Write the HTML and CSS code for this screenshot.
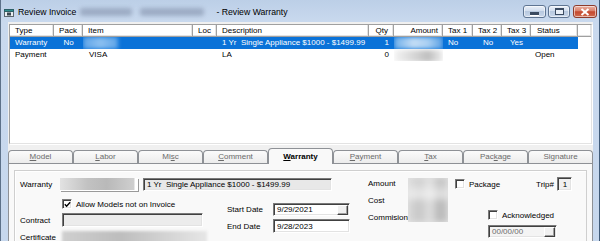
FILE: index.html
```html
<!DOCTYPE html>
<html lang="en">
<head>
<meta charset="utf-8">
<title>Review Invoice - Review Warranty</title>
<link rel="stylesheet" href="styles.css">
</head>
<body>
<div class="window">
  <div class="titlebar">
    <svg class="appicon" width="11" height="10" viewBox="0 0 11 10">
      <rect x="0.5" y="1.5" width="9" height="7" fill="#e8eef2" stroke="#5b6770"/>
      <rect x="0.5" y="1.5" width="9" height="2" fill="#2f8f8f" stroke="#2b5f66"/>
      <rect x="3" y="4.5" width="4" height="3" fill="#3a4650"/>
    </svg>
    <span class="title">Review Invoice</span>
    <span class="title-blur"><i class="b1"></i><i class="b2"></i></span>
    <span class="title title2">- Review Warranty</span>
    <div class="caption-btns">
      <div class="cbtn cmin"><span class="g-min"></span></div>
      <div class="cbtn cmax"><span class="g-max"></span></div>
      <div class="cbtn cclose">
        <svg width="10" height="8" viewBox="0 0 10 8"><path d="M1.5 1 L8.5 7 M8.5 1 L1.5 7" stroke="#fff" stroke-width="2"/></svg>
      </div>
    </div>
  </div>

  <div class="client">
    <div class="listview">
      <div class="lv-row lv-head">
        <div class="c c-type">Type</div>
        <div class="c c-pack">Pack</div>
        <div class="c c-item">Item</div>
        <div class="c c-loc">Loc</div>
        <div class="c c-desc">Description</div>
        <div class="c c-qty">Qty</div>
        <div class="c c-amt">Amount</div>
        <div class="c c-t1">Tax 1</div>
        <div class="c c-t2">Tax 2</div>
        <div class="c c-t3">Tax 3</div>
        <div class="c c-status">Status</div>
        <div class="c c-fill"></div>
      </div>
      <div class="lv-row sel">
        <div class="c c-type">Warranty</div>
        <div class="c c-pack">No</div>
        <div class="c c-item blurcell"><i class="blur-sel-item"></i></div>
        <div class="c c-loc"></div>
        <div class="c c-desc">1 Yr&nbsp; Single Appliance $1000 - $1499.99</div>
        <div class="c c-qty">1</div>
        <div class="c c-amt blurcell"><i class="blur-sel-amt"></i></div>
        <div class="c c-t1">No</div>
        <div class="c c-t2">No</div>
        <div class="c c-t3">Yes</div>
        <div class="c c-status"></div>
        <div class="c c-fill"></div>
      </div>
      <div class="lv-row">
        <div class="c c-type">Payment</div>
        <div class="c c-pack"></div>
        <div class="c c-item">VISA</div>
        <div class="c c-loc"></div>
        <div class="c c-desc">LA</div>
        <div class="c c-qty">0</div>
        <div class="c c-amt blurcell"><i class="blur-amt"></i></div>
        <div class="c c-t1"></div>
        <div class="c c-t2"></div>
        <div class="c c-t3"></div>
        <div class="c c-status">Open</div>
        <div class="c c-fill"></div>
      </div>
    </div>

    <div class="tabs">
      <div class="tab"><u>M</u>odel</div>
      <div class="tab"><u>L</u>abor</div>
      <div class="tab">Mi<u>s</u>c</div>
      <div class="tab"><u>C</u>omment</div>
      <div class="tab active"><u>W</u>arranty</div>
      <div class="tab"><u>P</u>ayment</div>
      <div class="tab"><u>T</u>ax</div>
      <div class="tab">Pac<u>k</u>age</div>
      <div class="tab">Signature</div>
    </div>

    <div class="tabpanel">
      <div class="group">
        <div class="gl">
          <div class="row-a">
            <span class="lbl lbl-w40">Warranty</span>
            <span class="blur-field"></span>
            <span class="field field-desc">1 Yr&nbsp; Single Appliance $1000 - $1499.99</span>
          </div>
          <div class="gl-bottom">
            <div class="sub-left">
              <div class="chkrow">
                <span class="chk checked">
                  <svg width="7" height="7" viewBox="0 0 7 7"><path d="M0.8 3.2 L2.6 5.2 L6.2 1.2" fill="none" stroke="#000" stroke-width="1.4"/></svg>
                </span>
                <span class="lbl">Allow Models not on Invoice</span>
              </div>
              <div class="frow frow-contract">
                <span class="lbl lbl-w42">Contract</span>
                <span class="field field-contract"></span>
              </div>
              <div class="frow frow-cert">
                <span class="lbl lbl-w42">Certificate</span>
                <span class="blur-cert"></span>
              </div>
            </div>
            <div class="sub-right">
              <div class="frow frow-start">
                <span class="lbl lbl-w46">Start Date</span>
                <span class="field field-date">9/29/2021<span class="dbtn"></span></span>
              </div>
              <div class="frow frow-end">
                <span class="lbl lbl-w46">End Date</span>
                <span class="field field-date field-end">9/28/2023</span>
              </div>
            </div>
          </div>
        </div>

        <div class="gm">
          <div class="gm-labels">
            <span class="lbl gm-l">Amount</span>
            <span class="lbl gm-l">Cost</span>
            <span class="lbl gm-l">Commision</span>
          </div>
          <div class="blur-amount"><i></i></div>
        </div>

        <div class="gr">
          <div class="gr-row1">
            <span class="chk"></span>
            <span class="lbl">Package</span>
            <span class="lbl trip-lbl">Trip#</span>
            <span class="field trip-box">1</span>
          </div>
          <div class="gr-row2">
            <span class="chk"></span>
            <span class="lbl">Acknowledged</span>
          </div>
          <div class="gr-row3">
            <span class="field field-dis">00/00/00<span class="dbtn"></span></span>
          </div>
        </div>
      </div>
    </div>
  </div>
</div>
</body>
</html>
```

FILE: styles.css
```css
* { box-sizing: border-box; }

html, body {
  margin: 0;
  padding: 0;
}

body {
  width: 600px;
  height: 241px;
  overflow: hidden;
  font-family: "Liberation Sans", Arial, sans-serif;
  font-size: 8px;
  color: #000;
  background: #c4d5eb;
}

.window {
  width: 600px;
  height: 241px;
  display: flex;
  flex-direction: column;
  background: linear-gradient(180deg, #bccfe7 0px, #c9d9ee 22px, #c6d7ed 100%);
  border-left: 1px solid #5d7189;
  border-right: 1px solid #3f5a78;
}

/* ---------- title bar ---------- */
.titlebar {
  height: 22px;
  flex: none;
  display: flex;
  align-items: center;
  padding-left: 3px;
  padding-top: 2px;
}

.appicon {
  flex: none;
  margin-top: 1px;
}

.title {
  font-size: 8.7px;
  color: #000;
  margin-left: 3px;
  white-space: nowrap;
}

.title-blur {
  display: flex;
  gap: 8px;
  margin-left: 4px;
  width: 136px;
  height: 8px;
}

.title-blur i {
  display: block;
  height: 8px;
  background: rgba(110, 125, 150, 0.45);
  filter: blur(2px);
  border-radius: 3px;
}

.title-blur .b1 { width: 52px; }
.title-blur .b2 { width: 64px; }

.title2 {
  margin-left: 0;
}

.caption-btns {
  margin-left: auto;
  align-self: flex-start;
  margin-top: 3px;
  margin-right: 2px;
  display: flex;
  gap: 2px;
}

.cbtn {
  height: 13px;
  border-radius: 3px;
  border: 1px solid #5f7592;
  display: flex;
  align-items: center;
  justify-content: center;
  background: linear-gradient(180deg, #eaf0f8 0%, #d2deee 45%, #b8c9df 50%, #c9d7ea 100%);
  box-shadow: inset 0 0 0 1px rgba(255,255,255,0.55);
}

.cmin { width: 23px; }
.cmax { width: 22px; }
.cclose {
  width: 24px;
  margin-left: 1px;
  border-color: #8d3b2c;
  background: linear-gradient(180deg, #eab0a2 0%, #d9806a 45%, #c4472d 52%, #d06b4f 100%);
}

.g-min {
  display: block;
  width: 9px;
  height: 3px;
  margin-top: 5px;
  background: #3b4b61;
  border: 1px solid #fff;
  box-sizing: content-box;
  border-width: 0 0 1px 0;
}

.g-max {
  display: block;
  width: 9px;
  height: 7px;
  border: 1px solid #3b4b61;
  border-top-width: 2px;
  background: #e9eff7;
}

/* ---------- client ---------- */
.client {
  flex: 1;
  margin-left: 7px;
  margin-right: 6px;
  background: #f0f0f0;
  padding-top: 2px;
  display: flex;
  flex-direction: column;
  min-height: 0;
}

/* list view */
.listview {
  flex: none;
  width: 583px;
  height: 120px;
  margin-left: 1px;
  background: #fff;
  border: 1px solid;
  border-color: #a0a0a0 #e3e3e3 #e3e3e3 #a0a0a0;
  box-shadow: 1px 1px 0 #fff;
}

.lv-row {
  display: grid;
  grid-template-columns: 44px 29px 110px 24px 152px 25px 49px 30px 29px 29px 47px 1fr;
  height: 12px;
  line-height: 12px;
  white-space: nowrap;
}

.lv-head .c {
  background: #fff;
  border-right: 1px solid #a0a0a0;
  border-bottom: 1px solid #a0a0a0;
  box-shadow: inset -1px -1px 0 #e3e3e3;
  line-height: 11px;
  padding-left: 5px;
}

.lv-head .c-fill { border-right: none; }

.c {
  overflow: hidden;
  padding-left: 5px;
}

.c-pack { text-align: center; padding-left: 0; }
.lv-head .c-pack { text-align: center; padding-left: 0; }
.c-item { padding-left: 6px; }
.lv-head .c-item { padding-left: 5px; }
.c-qty, .lv-head .c-qty { text-align: right; padding-left: 0; padding-right: 5px; }
.c-amt, .lv-head .c-amt { text-align: right; padding-left: 0; padding-right: 4px; }
.c-t2 { padding-left: 10px; }
.c-t3 { padding-left: 8px; }
.c-status { padding-left: 4px; }
.lv-head .c-status { padding-left: 6px; }

.sel .c:not(.c-fill) {
  background: #0a72d8;
  color: #fff;
}

.blurcell {
  padding: 0;
}

.blurcell i {
  display: block;
  height: 12px;
  filter: blur(2px);
}

.blur-sel-item {
  width: 35px;
  background: linear-gradient(90deg, #5ea4e8, #8cc0f0 50%, #5ea4e8);
}

.blur-sel-amt {
  width: 49px;
  background: linear-gradient(90deg, #6eaee9, #c3ddf5 40%, #a8cff2 70%, #5a9fe4);
}

.blur-amt {
  width: 49px;
  margin-top: 1px;
  background: linear-gradient(90deg, #f4f4f4, #d3d3d3 45%, #bfbfbf 70%, #efefef);
}

/* tabs */
.tabs {
  flex: none;
  display: flex;
  align-items: flex-end;
  height: 15px;
  margin-top: 4px;
  position: relative;
  z-index: 1;
}

.tab {
  width: 65px;
  height: 13px;
  border: 1px solid #8e9196;
  border-bottom: none;
  border-radius: 4px 4px 0 0;
  background: linear-gradient(180deg, #fbfbfb, #ececec);
  color: #6a6a6a;
  text-align: center;
  line-height: 12px;
  white-space: nowrap;
}

.tab.active {
  height: 16px;
  margin-bottom: -1px;
  background: #f9f9f9;
  color: #000;
  font-weight: bold;
  line-height: 15px;
}

.tabpanel {
  flex: 1;
  background: #f9f9f9;
  border: 1px solid #8e9196;
  border-bottom: none;
  padding: 6px 5px 0 5px;
  min-height: 0;
}

/* group box */
.group {
  height: 100%;
  border: 1px solid #cfcfcf;
  border-bottom: none;
  box-shadow: inset 1px 1px 0 #fff;
  padding: 7px 5px 0 5px;
  display: flex;
  align-items: flex-start;
}

.lbl {
  white-space: nowrap;
  flex: none;
}

.lbl-w40 { width: 40px; }
.lbl-w42 { width: 42px; }
.lbl-w46 { width: 46px; }

.field {
  display: flex;
  align-items: center;
  border: 1px solid;
  border-color: #7a7a7a #ffffff #ffffff #7a7a7a;
  box-shadow: inset 1px 1px 0 #404040, inset -1px -1px 0 #e3e3e3;
  background: #fff;
  padding-left: 3px;
  white-space: nowrap;
  overflow: hidden;
  position: relative;
  flex: none;
}

/* left column */
.gl {
  width: 330px;
  flex: none;
  display: flex;
  flex-direction: column;
}

.row-a {
  display: flex;
  align-items: center;
  height: 13px;
}

.blur-field {
  width: 78px;
  height: 13px;
  flex: none;
  background: linear-gradient(90deg, #e2e2e2, #c2c2c2 35%, #b9b9b9 60%, #cfcfcf 95%, #ffffff 96%);
  border-bottom: 1px solid #fff;
  box-shadow: 1px 1px 0 #9a9a9a;
}

.field-desc {
  width: 189px;
  height: 13px;
  margin-left: 5px;
  background: #e8e8e8;
}

.gl-bottom {
  display: flex;
}

.sub-left {
  width: 207px;
  flex: none;
  display: flex;
  flex-direction: column;
}

.chkrow {
  display: flex;
  align-items: center;
  height: 10px;
  margin-top: 8px;
  padding-left: 42px;
  gap: 4px;
}

.chk {
  width: 10px;
  height: 10px;
  flex: none;
  display: flex;
  align-items: center;
  justify-content: center;
  background: #fff;
  border: 1px solid;
  border-color: #7a7a7a #fff #fff #7a7a7a;
  box-shadow: inset 1px 1px 0 #404040, inset -1px -1px 0 #e3e3e3;
}

.frow {
  display: flex;
  align-items: center;
}

.frow-contract {
  margin-top: 4px;
  height: 14px;
}

.field-contract {
  width: 141px;
  height: 14px;
  background: #ececec;
}

.frow-cert {
  margin-top: 4px;
  height: 12px;
  align-items: flex-start;
}

.frow-cert .lbl {
  line-height: 12px;
  margin-top: 1px;
}

.blur-cert {
  width: 145px;
  height: 14px;
  flex: none;
  background: linear-gradient(90deg, #cfcfcf, #bdbdbd 40%, #d2d2d2 70%, #e6e6e6);
  filter: blur(1.5px);
}

.sub-right {
  width: 123px;
  flex: none;
  display: flex;
  flex-direction: column;
}

.frow-start {
  margin-top: 12px;
  height: 13px;
}

.frow-end {
  margin-top: 3px;
  height: 14px;
}

.field-date {
  width: 77px;
  height: 100%;
}

.dbtn {
  position: absolute;
  right: 1px;
  top: 1px;
  width: 11px;
  height: 10px;
  background: #f0f0f0;
  border: 1px solid;
  border-color: #fff #404040 #404040 #fff;
  box-shadow: inset -1px -1px 0 #a0a0a0;
}

/* middle column */
.gm {
  width: 80px;
  flex: none;
  margin-left: 18px;
  display: flex;
  height: 44px;
}

.gm-labels {
  width: 40px;
  flex: none;
  display: flex;
  flex-direction: column;
  gap: 5px;
}

.gm-l {
  line-height: 12px;
  height: 12px;
}

.blur-amount {
  width: 40px;
  height: 44px;
  flex: none;
  overflow: hidden;
  background: #e4e4e4;
}

.blur-amount i {
  display: block;
  width: 100%;
  height: 100%;
  filter: blur(3px);
  background:
    linear-gradient(180deg, rgba(255,255,255,0) 0%, rgba(255,255,255,0.6) 40%, rgba(255,255,255,0) 55%),
    linear-gradient(90deg, #d8d8d8 0%, #c6c6c6 30%, #e0e0e0 55%, #b5b5b5 80%, #c9c9c9 100%);
}

/* right column */
.gr {
  width: 117px;
  flex: none;
  margin-left: 7px;
  display: flex;
  flex-direction: column;
}

.gr-row1 {
  display: flex;
  align-items: center;
  height: 14px;
  margin-top: -1px;
  gap: 4px;
}

.trip-lbl {
  margin-left: auto;
}

.trip-box {
  width: 15px;
  height: 14px;
  margin-left: -1px;
  background: #f0f0f0;
  justify-content: center;
  padding-left: 1px;
}

.gr-row2 {
  display: flex;
  align-items: center;
  height: 12px;
  margin-top: 18px;
  padding-left: 33px;
  gap: 4px;
}

.gr-row3 {
  margin-top: 4px;
  padding-left: 33px;
  height: 13px;
  display: flex;
}

.field-dis {
  width: 69px;
  height: 13px;
  background: #f4f4f4;
  color: #6d6d6d;
}
```
